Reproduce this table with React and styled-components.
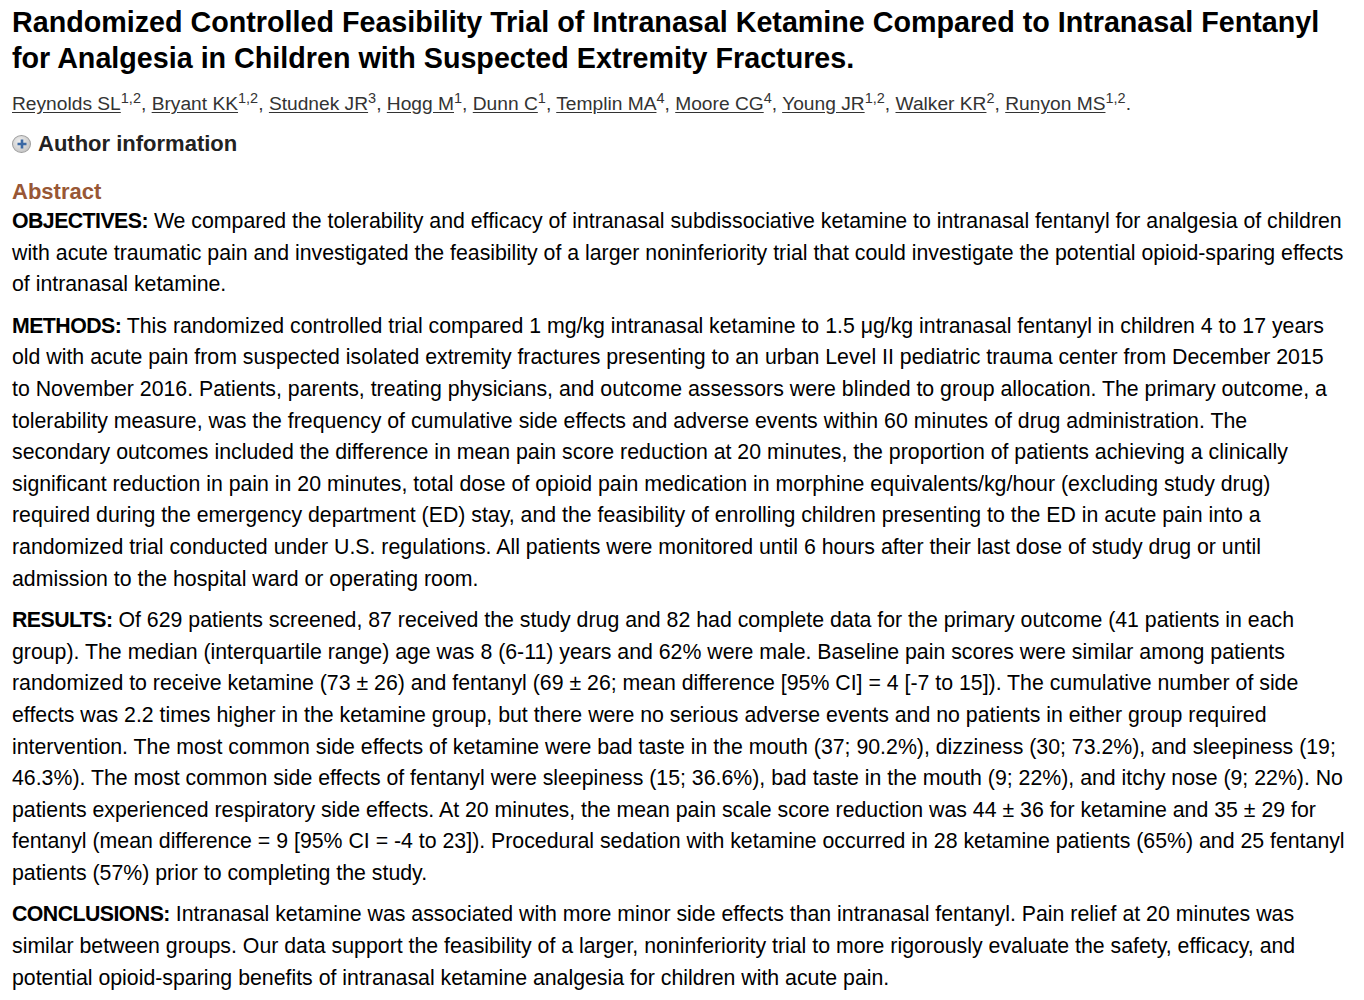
import React from "react";
import styled, { createGlobalStyle } from "styled-components";

const Global = createGlobalStyle`
  html, body { margin: 0; padding: 0; background: #fff; }
  body { font-family: "Liberation Sans", Arial, sans-serif; color: #000; }
`;

const Page = styled.div`
  padding: 4px 18px 0 12px;
`;

const Title = styled.h1`
  margin: 0;
  font-size: 28.7px;
  line-height: 36px;
  font-weight: bold;
  color: #000;
`;

const Authors = styled.div`
  margin-top: 16px;
  font-size: 19.2px;
  line-height: 24px;
  color: #333;
`;

const AuthorLink = styled.a`
  color: #333;
  text-decoration: underline;
  text-underline-offset: 2px;
`;

const Sup = styled.sup`
  font-size: 14.5px;
  line-height: 0;
  vertical-align: 7px;
`;

const InfoToggle = styled.div`
  margin-top: 15px;
  display: flex;
  align-items: center;
  gap: 7px;
  font-size: 22px;
  font-weight: bold;
  color: #222;
`;

const PlusIcon = styled.span`
  width: 19px;
  height: 18px;
  border-radius: 50%;
  display: inline-flex;
  align-items: center;
  justify-content: center;
  background: radial-gradient(circle at 40% 35%, #f0f0f0, #b8b8b8);
  border: 1px solid #9c9c9c;
  box-sizing: border-box;
`;

const AbstractHead = styled.h3`
  margin: 21px 0 0 0;
  font-size: 22px;
  line-height: 28px;
  font-weight: bold;
  color: #985735;
`;

const Para = styled.p`
  margin: 0 0 10px 0;
  font-size: 21.3px;
  line-height: 31.6px;
  color: #000;
`;

const Label = styled.strong`
  font-weight: bold;
  letter-spacing: -0.55px;
`;

const authors = [
  ["Reynolds SL", "1,2"],
  ["Bryant KK", "1,2"],
  ["Studnek JR", "3"],
  ["Hogg M", "1"],
  ["Dunn C", "1"],
  ["Templin MA", "4"],
  ["Moore CG", "4"],
  ["Young JR", "1,2"],
  ["Walker KR", "2"],
  ["Runyon MS", "1,2"],
];

const sections = [
  [
    "OBJECTIVES:",
    "We compared the tolerability and efficacy of intranasal subdissociative ketamine to intranasal fentanyl for analgesia of children with acute traumatic pain and investigated the feasibility of a larger noninferiority trial that could investigate the potential opioid-sparing effects of intranasal ketamine.",
  ],
  [
    "METHODS:",
    "This randomized controlled trial compared 1 mg/kg intranasal ketamine to 1.5 μg/kg intranasal fentanyl in children 4 to 17 years old with acute pain from suspected isolated extremity fractures presenting to an urban Level II pediatric trauma center from December 2015 to November 2016. Patients, parents, treating physicians, and outcome assessors were blinded to group allocation. The primary outcome, a tolerability measure, was the frequency of cumulative side effects and adverse events within 60 minutes of drug administration. The secondary outcomes included the difference in mean pain score reduction at 20 minutes, the proportion of patients achieving a clinically significant reduction in pain in 20 minutes, total dose of opioid pain medication in morphine equivalents/kg/hour (excluding study drug) required during the emergency department (ED) stay, and the feasibility of enrolling children presenting to the ED in acute pain into a randomized trial conducted under U.S. regulations. All patients were monitored until 6 hours after their last dose of study drug or until admission to the hospital ward or operating room.",
  ],
  [
    "RESULTS:",
    "Of 629 patients screened, 87 received the study drug and 82 had complete data for the primary outcome (41 patients in each group). The median (interquartile range) age was 8 (6-11) years and 62% were male. Baseline pain scores were similar among patients randomized to receive ketamine (73 ± 26) and fentanyl (69 ± 26; mean difference [95% CI] = 4 [-7 to 15]). The cumulative number of side effects was 2.2 times higher in the ketamine group, but there were no serious adverse events and no patients in either group required intervention. The most common side effects of ketamine were bad taste in the mouth (37; 90.2%), dizziness (30; 73.2%), and sleepiness (19; 46.3%). The most common side effects of fentanyl were sleepiness (15; 36.6%), bad taste in the mouth (9; 22%), and itchy nose (9; 22%). No patients experienced respiratory side effects. At 20 minutes, the mean pain scale score reduction was 44 ± 36 for ketamine and 35 ± 29 for fentanyl (mean difference = 9 [95% CI = -4 to 23]). Procedural sedation with ketamine occurred in 28 ketamine patients (65%) and 25 fentanyl patients (57%) prior to completing the study.",
  ],
  [
    "CONCLUSIONS:",
    "Intranasal ketamine was associated with more minor side effects than intranasal fentanyl. Pain relief at 20 minutes was similar between groups. Our data support the feasibility of a larger, noninferiority trial to more rigorously evaluate the safety, efficacy, and potential opioid-sparing benefits of intranasal ketamine analgesia for children with acute pain.",
  ],
];

export default function App() {
  return (
    <Page>
      <Global />
      <Title>
        Randomized Controlled Feasibility Trial of Intranasal Ketamine Compared to Intranasal Fentanyl for Analgesia in Children with Suspected Extremity Fractures.
      </Title>
      <Authors>
        {authors.map(([name, sup], i) => (
          <React.Fragment key={name}>
            <AuthorLink href="#">{name}</AuthorLink>
            <Sup>{sup}</Sup>
            {i < authors.length - 1 ? ", " : "."}
          </React.Fragment>
        ))}
      </Authors>
      <InfoToggle>
        <PlusIcon>
          <svg width="12" height="12" viewBox="0 0 12 12">
            <path d="M6 1.5v9M1.5 6h9" stroke="#3a68a4" strokeWidth="2.6" />
          </svg>
        </PlusIcon>
        Author information
      </InfoToggle>
      <AbstractHead>Abstract</AbstractHead>
      {sections.map(([label, text]) => (
        <Para key={label}>
          <Label>{label}</Label> {text}
        </Para>
      ))}
    </Page>
  );
}
